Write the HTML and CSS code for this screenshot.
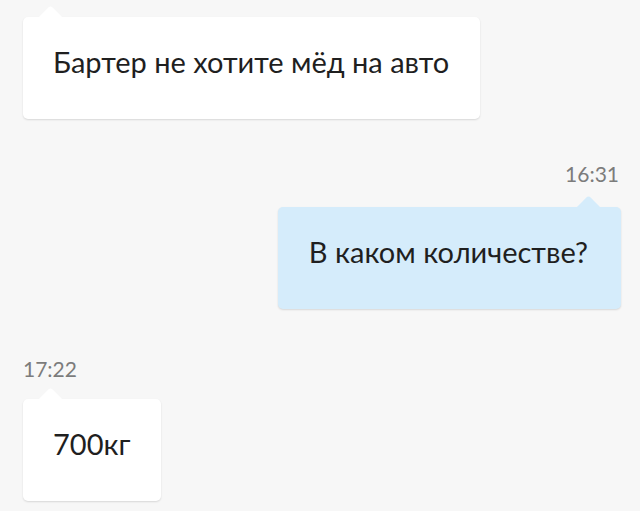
FILE: index.html
```html
<!DOCTYPE html>
<html lang="ru">
<head>
<meta charset="utf-8">
<link rel="stylesheet" href="styles.css">
</head>
<body>
<div class="chat">
  <div class="msg msg-in first">
    <div class="bubble bubble-in">Бартер не хотите мёд на авто</div>
  </div>
  <div class="msg msg-out">
    <div class="time">16:31</div>
    <div class="bubble bubble-out">В каком количестве?</div>
  </div>
  <div class="msg msg-in last">
    <div class="time">17:22</div>
    <div class="bubble bubble-in">700кг</div>
  </div>
</div>
</body>
</html>
```
FILE: styles.css
```css
html, body {
  margin: 0;
  padding: 0;
  background: #f7f7f7;
}
body {
  font-family: Lato, "Noto Sans", sans-serif;
  color: #1f1f1f;
  width: 640px;
  height: 511px;
  overflow: hidden;
}
.chat {
  display: flex;
  flex-direction: column;
}
.msg {
  display: flex;
  flex-direction: column;
}
.msg-in {
  align-items: flex-start;
  padding-left: 23px;
}
.msg-out {
  align-items: flex-end;
  padding-right: 19px;
  margin-top: 43px;
}
.first {
  margin-top: 17px;
}
.last {
  margin-top: 48px;
}
.time {
  font-size: 21px;
  line-height: 24px;
  color: #7c7c7c;
}
.msg-out .time {
  margin-bottom: 21px;
  margin-right: 2px;
}
.last .time {
  margin-bottom: 18px;
}
.bubble {
  position: relative;
  font-size: 29px;
  line-height: 34px;
  padding: 28px 31px 40px 30px;
  border-radius: 5px;
  background: #fff;
  box-shadow: 0 1px 2px rgba(0, 0, 0, 0.13);
}
.bubble::before {
  content: "";
  position: absolute;
  top: -8px;
  width: 17px;
  height: 17px;
  background: inherit;
  border-top-left-radius: 3px;
  transform: rotate(45deg);
}
.bubble-in::before {
  left: 19px;
}
.bubble-out {
  background: #d5ecfb;
  padding-left: 31px;
  padding-right: 33px;
}
.bubble-out::before {
  right: 24px;
}
```
